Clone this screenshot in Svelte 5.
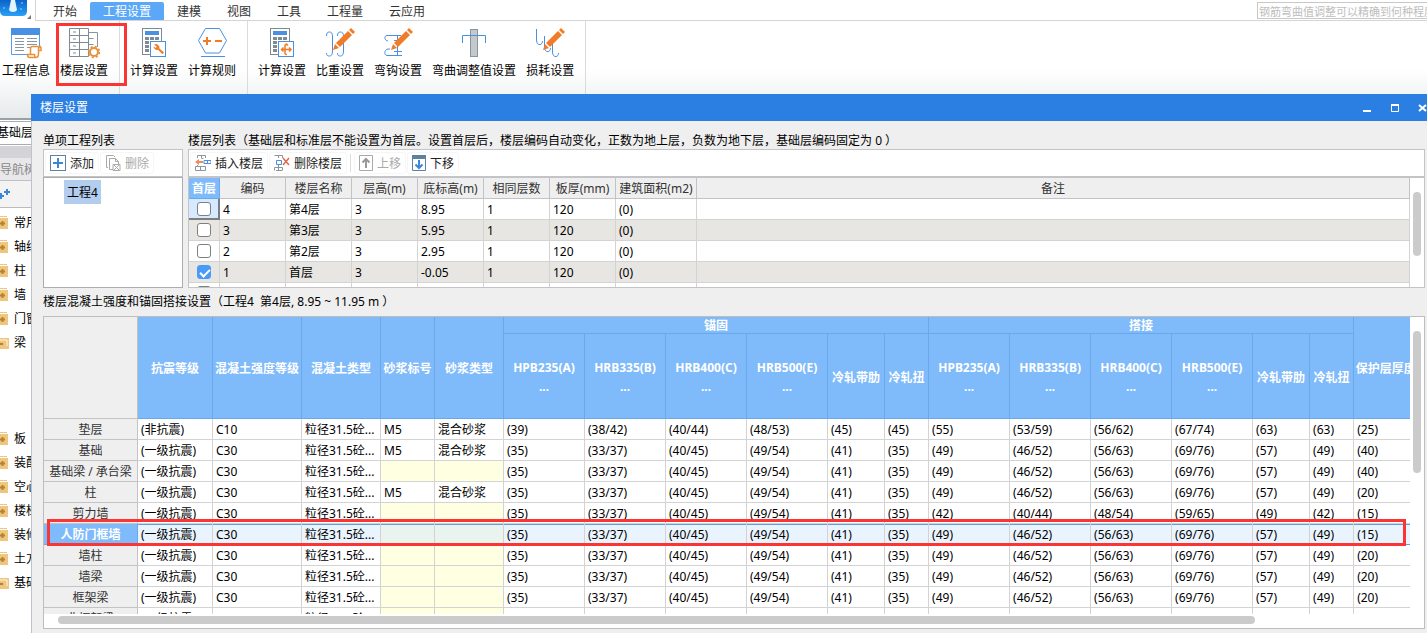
<script>
	const tabs = ['开始', '工程设置', '建模', '视图', '工具', '工程量', '云应用'];
	let activeTab = '工程设置';

	const ribbon = [
		[
			{ icon: 'info', text: '工程信息' },
			{ icon: 'floor', text: '楼层设置', marked: true }
		],
		[
			{ icon: 'calc', text: '计算设置' },
			{ icon: 'rule', text: '计算规则' }
		],
		[
			{ icon: 'calcMove', text: '计算设置' },
			{ icon: 'weight', text: '比重设置' },
			{ icon: 'hook', text: '弯钩设置' },
			{ icon: 'bend', text: '弯曲调整值设置' },
			{ icon: 'loss', text: '损耗设置' }
		]
	];

	const tree = [
		{ text: '常用构件类型' },
		{ text: '轴线' },
		{ text: '柱' },
		{ text: '墙' },
		{ text: '门窗洞' },
		{ text: '梁', open: true },
		{ text: '板' },
		{ text: '装配式' },
		{ text: '空心楼盖' },
		{ text: '楼梯' },
		{ text: '装修' },
		{ text: '土方' },
		{ text: '基础', open: true }
	];

	const floorHead = ['首层', '编码', '楼层名称', '层高(m)', '底标高(m)', '相同层数', '板厚(mm)', '建筑面积(m2)', '备注'];
	let floors = [
		{ first: false, cells: ['4', '第4层', '3', '8.95', '1', '120', '(0)', ''] },
		{ first: false, cells: ['3', '第3层', '3', '5.95', '1', '120', '(0)', ''] },
		{ first: false, cells: ['2', '第2层', '3', '2.95', '1', '120', '(0)', ''] },
		{ first: true, cells: ['1', '首层', '3', '-0.05', '1', '120', '(0)', ''] },
		{ first: false, cells: ['', '', '', '', '', '', '', ''] }
	];

	const grades = ['HPB235(A)', 'HRB335(B)', 'HRB400(C)', 'HRB500(E)', '冷轧带肋', '冷轧扭'];
	const anchor = ['(35)', '(33/37)', '(40/45)', '(49/54)', '(41)', '(35)'];
	const lap = ['(49)', '(46/52)', '(56/63)', '(69/76)', '(57)', '(49)'];
	const mix = '粒径31.5砼...';

	function part(name, cover, mortar = false, overlap = lap) {
		return {
			name,
			cells: ['(一级抗震)', 'C30', mix, mortar ? 'M5' : '', mortar ? '混合砂浆' : '', ...anchor, ...overlap, cover]
		};
	}

	const parts = [
		{
			name: '垫层',
			cells: [
				'(非抗震)', 'C10', mix, 'M5', '混合砂浆',
				'(39)', '(38/42)', '(40/44)', '(48/53)', '(45)', '(45)',
				'(55)', '(53/59)', '(56/62)', '(67/74)', '(63)', '(63)', '(25)'
			]
		},
		part('基础', '(40)', true),
		part('基础梁 / 承台梁', '(40)'),
		part('柱', '(20)', true),
		part('剪力墙', '(15)', false, ['(42)', '(40/44)', '(48/54)', '(59/65)', '(49)', '(42)']),
		part('人防门框墙', '(15)'),
		part('墙柱', '(20)'),
		part('墙梁', '(20)'),
		part('框架梁', '(20)'),
		part('非框架梁', '(20)')
	];
	let selected = '人防门框墙';
	const widths = [94, 75, 89, 79, 54, 69, 81, 81, 81, 81, 57, 44, 81, 81, 81, 81, 57, 44, 64];
</script>

{#snippet pencil()}
	<path d="M9 23l2-6 4 4z" fill="#f07c28" />
	<path d="M12 16L24 4l4 4-12 12z" fill="#f07c28" />
	<path d="M25 3l2-2 4 4-2 2z" fill="#f07c28" />
{/snippet}

{#snippet calculator()}
	<rect x="4.5" y="1.5" width="19" height="26" fill="#fff" stroke="#7f8b93" />
	<rect x="7" y="4" width="14" height="4" fill="#4a90e2" />
	<path d="M7 10h4v3H7zm5 0h4v3h-4zm5 0h4v3h-4zM7 14h4v3H7zm5 0h4v3h-4zM7 18h4v3H7zm0 4h4v3H7z" fill="#7f8b93" />
	<rect x="12.5" y="14.5" width="15" height="15" fill="#fff" stroke="#4a90e2" />
{/snippet}

{#snippet ribbonIcon(name)}
	<svg width="32" height="32" viewBox="0 0 32 32" fill="none" aria-hidden="true">
		{#if name === 'info'}
			<path d="M1.5 8v19.5h16M29.5 8v11" stroke="#5b9be5" />
			<path d="M1 1h29v7H1z" fill="#4a90e2" />
			<path d="M5 11.5h9m3 0h10M5 14.5h9m3 0h10M5 17.5h9m3 0h10M5 20.5h9m3 0h3M5 23.5h9" stroke="#8a959c" />
			<path d="M20.5 27V21.500c0-1.500.8-2 2-2H31c-1.500 0-2.500 1-2.500 2.500V27c0 2.500-1 3.500-3 3.500h-6c-1.500 0-2-1-2-3h7c0 2 .5 3 1.500 3M28.500 23.500h2.500V20" fill="#fff" stroke="#e8913a" stroke-width="1.500" />
		{:else if name === 'floor'}
			<path d="M20.5 5.5h9V20M20.5 11.5h5m-5 6h5m-5 6h1" stroke="#8a959c" />
			<path d="M1.5 1.5h19v28h-19zM11.5 1.5v28M1.5 8.500h19M1.5 15.5h19M1.5 22.5h19M5 5h3m-3 7h3m-3 7h3m-3 7h3" stroke="#7f8b93" />
			<circle cx="26" cy="25" r="4" fill="#fff" stroke="#e8913a" stroke-width="2" />
			<circle cx="26" cy="25" r="5.5" stroke="#e8913a" stroke-width="1.500" stroke-dasharray="2.200 2.120" />
		{:else if name === 'calc'}
			{@render calculator()}
			<path d="M16 17.5l3-.5 2.500 2.500-.3 1.800 4.800 4.200-1.500 1.800-4.500-4.600-2 .3-2.400-2.300.2-1.200 1.700 1.500 1.300-1.200z" fill="#f07c28" />
		{:else if name === 'calcMove'}
			{@render calculator()}
			<path d="M20.500 17.500c-2 0-1.500 2-1.500 4v5c0 1 1 1 2 1M18.500 18.500l2-1.500 1.500 1.500M16 22.500h8.500M17.500 20.500l-2 2 2 2M23 20.500l2 2-2 2" stroke="#f07c28" stroke-width="1.500" />
		{:else if name === 'rule'}
			<path d="M2.5 13.5l7-12h14l7 12-7 12.5h-14z" stroke="#4a90e2" />
			<path d="M5 29.5h24" stroke="#4a90e2" />
			<path d="M7 14h8m-4-4v8M19 14h7" stroke="#f07c28" stroke-width="2" />
		{:else if name === 'weight'}
			<path d="M2.5 9c0-3 1-4 3-4s3 1.500 3 4v15c0 3.500-1 5-3 5s-3-.5-3-3M13.500 9c0-3 1-4 3-4s3 1.500 3 4v15c0 3.500-1 5-3 5s-3-.5-3-3" stroke="#4a90e2" />
			{@render pencil()}
		{:else if name === 'hook'}
			<path d="M19 8.500H5c-3 0-3 5 1 5.500M20 28.500H5c-3 0-3-6 1-6.500h2M15.500 9v19M12 13.500h10M12 24.500h8" stroke="#4a90e2" />
			{@render pencil()}
		{:else if name === 'bend'}
			<rect x="12.5" y="2.5" width="7" height="27" fill="#c3c8cc" stroke="#8a959c" />
			<path d="M4.5 16V8.500h23V16" stroke="#4a90e2" />
		{:else}
			<path d="M2.5 2v11c0 6 6 6 6 1M10.500 9v11c0 6 6 6 6 1M18.500 16v9c0 6 6 6 6 1" stroke="#4a90e2" />
			{@render pencil()}
		{/if}
	</svg>
{/snippet}

<div class="app">
	<header>
		<div class="logo">
			<svg width="35" height="20" viewBox="0 0 35 20" aria-hidden="true">
				<defs>
					<linearGradient id="logoFill" x1="0" y1="0" x2="0" y2="1">
						<stop offset="0" stop-color="#0b63c8" />
						<stop offset="1" stop-color="#2aa0f6" />
					</linearGradient>
				</defs>
				<path d="M0 0h27v11q0 5-5 5H5q-5 0-5-5z" fill="url(#logoFill)" />
				<path d="M11 0h4l2 10q-1 2-4 2t-4-2z" fill="#e4f4ff" />
				<path d="M3 8h2M21 3h2M20 9h2" stroke="#8fd0ff" />
				<path d="M31 15v4h-4z" fill="#777" />
			</svg>
		</div>
		<nav>
			{#each tabs as tab}
				<button class="tab" class:active={tab === activeTab} on:click={() => (activeTab = tab)}>{tab}</button>
			{/each}
		</nav>
		<input class="search" type="text" aria-label="搜索" placeholder="钢筋弯曲值调整可以精确到何种程度" />
	</header>

	<div class="ribbon">
		{#each ribbon as group}
			<div class="group">
				{#each group as item}
					<button class="tool" class:marked={item.marked}>
						{@render ribbonIcon(item.icon)}
						<span>{item.text}</span>
					</button>
				{/each}
			</div>
		{/each}
	</div>

	<aside>
		<select class="floorSelect" aria-label="楼层"><option>基础层</option></select>
		<h2>导航树</h2>
		<div class="treeTools">
			<svg width="20" height="16" viewBox="0 0 20 16" aria-hidden="true">
				<path d="M15 2v6M12 5h6M9 6v6M6 9h6" stroke="#3b86d8" stroke-width="2" />
			</svg>
		</div>
		<ul class="tree">
			{#each tree as node}
				<li class:open={node.open}>
					<svg width="14" height="14" viewBox="0 0 14 14" aria-hidden="true">
						{#if node.open}
							<path d="M1 2h13v11H1z" fill="#efc680" />
							<path d="M2 4h10v6" fill="none" stroke="#fff5dd" />
							<path d="M3 8h5" stroke="#b5832f" stroke-width="2" />
						{:else}
							<path d="M3 0h9v1H3zM1 2h12v11H1z" fill="#efc680" />
							<path d="M5 7.500h5M7.500 5v5" stroke="#b5832f" stroke-width="2" />
						{/if}
					</svg>
					{node.text}
				</li>
			{/each}
		</ul>
	</aside>

	<section class="dialog">
		<div class="titleBar">
			<h1>楼层设置</h1>
			<button aria-label="最小化"><svg width="10" height="10"><path d="M1 8h8" stroke="#fff" stroke-width="2" /></svg></button>
			<button aria-label="最大化"
				><svg width="10" height="10"><path d="M1 2h8M1.500 2v6.500h7V2" fill="none" stroke="#fff" /><path d="M1 2h8" stroke="#fff" stroke-width="2" /></svg></button
			>
			<button aria-label="关闭"><svg width="10" height="10"><path d="M1 2l7 6M8 2L1 8" stroke="#fff" stroke-width="2" /></svg></button>
		</div>

		<div class="body">
			<div class="top">
				<div class="projects">
					<h3>单项工程列表</h3>
					<div class="toolbar">
						<button>
							<svg width="16" height="16" fill="none"><rect x="0.5" y="0.5" width="15" height="15" stroke="#60809c" /><path d="M3 8h10M8 3v10" stroke="#3b86d8" stroke-width="2" /></svg>
							<span>添加</span>
						</button>
						<button disabled>
							<svg width="16" height="16" fill="none" stroke="#aaa"><path d="M3 12.5H1.500v-12h7L10 2M4.500 3.500h6l3 3V9M4.500 3.500v11H8M10.500 3.500v3h3" /><path d="M8 9.500h7v6H8zM9 10l5 5M14 10l-5 5" /></svg>
							<span>删除</span>
						</button>
					</div>
					<div class="projectList"><span>工程4</span></div>
				</div>

				<div class="floors">
					<h3>楼层列表（基础层和标准层不能设置为首层。设置首层后，楼层编码自动变化，正数为地上层，负数为地下层，基础层编码固定为 0 ）</h3>
					<div class="toolbar">
						<button>
							<svg width="16" height="16" fill="none"><path d="M2.5 3V.5h8V3M6.500.5V3M.5 11.500h10v4H.5zM5.500 11.500v4M2.500 10V11M6.500 3.500h2" stroke="#8a959c" /><path d="M9 5.500h7v3H9zM12.500 5.500v3" stroke="#4a90e2" /><path d="M0 7l4-3v2h4v2H4v2z" fill="#f5895c" /></svg>
							<span>插入楼层</span>
						</button>
						<button>
							<svg width="16" height="16" fill="none"><path d="M.5.5h8V3M4.500.5V3M.5 15.500V12.500h8v3M4.500 10v6M2 15.500h6" stroke="#8a959c" /><path d="M2.500 5.500h5v4h-5z" stroke="#4a90e2" /><path d="M9 3l6 7M15 3l-6 7" stroke="#e2674a" stroke-width="1.500" /></svg>
							<span>删除楼层</span>
						</button>
						<i></i>
						<button disabled>
							<svg width="14" height="16" fill="none"><path d="M.5.5h13v15H.5z" stroke="#aaa" /><path d="M7 13V4M3.500 7.500L7 4l3.500 3.500" stroke="#999" stroke-width="2" /></svg>
							<span>上移</span>
						</button>
						<button>
							<svg width="14" height="16" fill="none"><path d="M.5.5h13v15H.5z" stroke="#60809c" /><path d="M0 0h14v4H0z" fill="#60809c" /><path d="M7 5v8M3.500 9.500L7 13l3.500-3.500" stroke="#3b86d8" stroke-width="2" /></svg>
							<span>下移</span>
						</button>
					</div>
					<div class="floorGrid">
						<table>
							<thead>
								<tr>
									{#each floorHead as title}
										<th>{title}</th>
									{/each}
								</tr>
							</thead>
							<tbody>
								{#each floors as floor, i}
									<tr>
										<td class:current={i === 0}>
											<input type="checkbox" aria-label="首层" bind:checked={floor.first} />
										</td>
										{#each floor.cells as cell}
											<td>{cell}</td>
										{/each}
									</tr>
								{/each}
							</tbody>
						</table>
						<div class="vScroll"><div></div></div>
					</div>
				</div>
			</div>

			<h3 class="gridTitle">楼层混凝土强度和锚固搭接设置（工程4&nbsp; 第4层, 8.95 ~ 11.95 m ）</h3>
			<div class="strength">
				<div class="gridView">
					<table>
						<colgroup>
							{#each widths as w}
								<col style="width: {w}px" />
							{/each}
						</colgroup>
						<thead>
							<tr class="groupRow">
								<th rowspan="2" class="corner" aria-label="构件"></th>
								<th rowspan="2">抗震等级</th>
								<th rowspan="2">混凝土强度等级</th>
								<th rowspan="2">混凝土类型</th>
								<th rowspan="2">砂浆标号</th>
								<th rowspan="2">砂浆类型</th>
								<th colspan="6">锚固</th>
								<th colspan="6">搭接</th>
								<th rowspan="2">保护层厚度</th>
							</tr>
							<tr class="gradeRow">
								{#each [...grades, ...grades] as grade}
									<th>{grade}{#if grade.startsWith('H')}<br />...{/if}</th>
								{/each}
							</tr>
						</thead>
						<tbody>
							{#each parts as row}
								<tr class:selected={row.name === selected} on:click={() => (selected = row.name)}>
									<th>{row.name}</th>
									{#each row.cells as cell}
										<td class:locked={cell === ''}>{cell}</td>
									{/each}
								</tr>
							{/each}
						</tbody>
					</table>
				</div>
				<div class="vScroll"><div></div></div>
				<div class="hScroll"><div></div></div>
				<div class="rowMark"></div>
			</div>
		</div>
	</section>
</div>

<style>
	:global(body) {
		margin: 0;
	}
	.app,
	.app :global(*) {
		box-sizing: border-box;
	}
	.app {
		position: relative;
		height: 100vh;
		overflow: hidden;
		background: #fff;
		color: #000;
		font: 12px/20px 'Noto Sans', 'Noto Sans CJK SC', sans-serif;
	}
	button {
		border: none;
		background: none;
		padding: 0;
		font: inherit;
		color: inherit;
		white-space: nowrap;
	}
	h1,
	h2,
	h3 {
		margin: 0;
		font-size: 12px;
		font-weight: 400;
		white-space: nowrap;
	}
	svg {
		flex: none;
		display: block;
	}

	header {
		display: flex;
		height: 21px;
		border-bottom: 1px solid #d5d5d5;
	}
	.logo {
		width: 36px;
		height: 21px;
		border-right: 1px solid #d5d5d5;
		background: #fff;
	}
	nav {
		display: flex;
		align-items: flex-end;
		padding-left: 4px;
	}
	.tab {
		height: 18px;
		padding: 2px 13px 0;
		line-height: 16px;
		color: #333;
	}
	.tab.active {
		background: #5ca8f8;
		color: #fff;
		border-radius: 2px 2px 0 0;
	}
	.search {
		flex: none;
		width: 190px;
		height: 17px;
		margin: 2px -20px 0 auto;
		padding: 1px 1px 0;
		border: 1px solid #c8c8c8;
		font: 11px/14px 'Noto Sans', 'Noto Sans CJK SC', sans-serif;
	}
	.search::placeholder {
		color: #bdbdbd;
		opacity: 1;
	}

	.ribbon {
		display: flex;
		height: 99px;
		border-bottom: 2px solid #9aa0a4;
		background: linear-gradient(#fff 50%, #e6eaeb);
	}
	.group {
		display: flex;
		align-items: flex-start;
		gap: 10px;
		padding: 6px 11px 0 10px;
		border-right: 1px solid #d9dcdd;
	}
	.group:first-child {
		padding-left: 2px;
	}
	.tool {
		position: relative;
		display: flex;
		flex-direction: column;
		align-items: center;
		gap: 2px;
	}
	.marked::after {
		content: '';
		position: absolute;
		inset: -4px -19px -5px -4px;
		border: 3px solid #fb3434;
		z-index: 1;
	}

	aside {
		width: 160px;
		margin-left: -8px;
	}
	.floorSelect {
		display: block;
		width: 100%;
		height: 24px;
		margin-top: 1px;
		padding: 0 4px;
		border: 1px solid #a9adb3;
		border-radius: 0;
		appearance: none;
		background: #fff;
		font: inherit;
		color: #000;
	}
	h2 {
		height: 35px;
		margin-top: 1px;
		padding-left: 8px;
		border-top: 12px solid #d3d3d8;
		border-bottom: 1px solid #c0c0c4;
		background: #e8e8ea;
		line-height: 24px;
		color: #888;
	}
	.treeTools {
		height: 27px;
		padding-top: 6px;
		border-bottom: 1px solid #bbb;
		background: #f3f3f3;
	}
	.tree {
		margin: 0;
		padding: 3px 0 0 3px;
		list-style: none;
	}
	.tree li {
		display: flex;
		align-items: center;
		gap: 5px;
		height: 24px;
		white-space: nowrap;
	}
	.tree li.open {
		margin-bottom: 72px;
	}

	.dialog {
		position: absolute;
		inset: 94px 0 0 31px;
		display: flex;
		flex-direction: column;
		border-left: 1px solid #bcc3cd;
		background: #efefef;
	}
	.titleBar {
		display: flex;
		flex: none;
		align-items: center;
		gap: 18px;
		height: 27px;
		margin: 0 -1px;
		padding-left: 9px;
		background: #2b7fe2;
		color: #fff;
	}
	.titleBar h1 {
		flex: 1;
		padding-top: 1px;
	}
	.body {
		display: flex;
		flex: 1;
		flex-direction: column;
		min-height: 0;
		padding: 10px 2px 4px 11px;
	}
	.top {
		display: flex;
		gap: 5px;
	}
	.projects {
		display: flex;
		flex: none;
		flex-direction: column;
		width: 140px;
	}
	.floors {
		flex: 1;
		min-width: 0;
	}
	h3 {
		height: 18px;
	}
	.toolbar {
		display: flex;
		align-items: center;
		gap: 1px;
		height: 28px;
		padding: 0 1px;
		border: 1px solid #c3c3c8;
		background: #fff;
	}
	.toolbar button {
		display: flex;
		align-items: center;
		gap: 4px;
		height: 22px;
		padding: 0 4px;
		border: 1px solid #f6f6f6;
		border-radius: 3px;
		color: #222;
	}
	.toolbar span {
		padding-top: 2px;
	}
	.toolbar button:disabled {
		color: #aaa;
	}
	.toolbar i {
		width: 1px;
		height: 18px;
		margin: 0 2px;
		background: #ddd;
	}
	.projectList {
		flex: 1;
		padding: 2px 20px;
		border: 1px solid #adadad;
		background: #fff;
	}
	.projectList span {
		display: inline-block;
		padding: 3px 3px 1px;
		background: #b3cdee;
	}

	table {
		border-collapse: separate;
		border-spacing: 0;
		table-layout: fixed;
	}
	th,
	td {
		height: 21px;
		padding: 2px 3px 0;
		border: solid #d3d3d3;
		border-width: 0 1px 1px 0;
		overflow: hidden;
		white-space: nowrap;
		text-align: left;
		font-weight: 400;
		line-height: 18px;
	}
	th {
		padding: 2px 0 0;
		border-color: #c3c3c3;
		background: #efefef;
		text-align: center;
		color: #333;
	}
	.floorGrid {
		display: flex;
		height: 111px;
		border: 1px solid #c3c3c8;
		background: #fff;
		overflow: hidden;
	}
	.floorGrid table {
		flex: 1;
		width: 100%;
		height: 126px;
	}
	.floorGrid th {
		width: 66px;
	}
	.floorGrid th:first-child {
		width: 31px;
		border-color: #69aaee;
		background: #7fbafa;
		color: #fff;
		font-weight: 700;
	}
	.floorGrid th:nth-child(8) {
		width: 81px;
	}
	.floorGrid th:last-child {
		width: auto;
	}
	.floorGrid tr:nth-child(even) td {
		background: #e8e6e2;
	}
	.floorGrid td:first-child {
		padding: 0;
		text-align: center;
	}
	.floorGrid tr td.current {
		border: solid #7d7d7d;
		border-width: 0 2px 2px 0;
		background: #d5e9ff;
	}
	input[type='checkbox'] {
		display: block;
		appearance: none;
		width: 14px;
		height: 14px;
		margin: 0 auto;
		border: 1px solid #808080;
		border-radius: 3px;
		background: #fff;
	}
	input[type='checkbox']:checked {
		border-color: #4a9bf8;
		background: #4a9bf8;
	}
	input[type='checkbox']:checked::after {
		content: '';
		display: block;
		width: 8px;
		height: 4px;
		margin: 3px 2px;
		border: solid #fff;
		border-width: 0 0 2px 2px;
		transform: rotate(-45deg);
	}
	.vScroll {
		flex: none;
		width: 14px;
		padding: 14px 2px 0 3px;
	}
	.vScroll div {
		width: 8px;
		height: 64px;
		border-radius: 4px;
		background: #cbcbcb;
	}

	.gridTitle {
		height: 28px;
		padding-top: 4px;
	}
	.strength {
		position: relative;
		display: grid;
		grid-template: minmax(0, 1fr) 14px / minmax(0, 1fr) 14px;
		flex: 1;
		min-height: 0;
		border: 1px solid #bdbdbd;
		background: #fff;
	}
	.gridView {
		overflow: hidden;
	}
	.gridView table {
		width: 1374px;
	}
	.strength .vScroll div {
		height: 142px;
	}
	thead tr[class] th {
		border-color: #69a8ea;
		background: #7fbafa;
		color: #fff;
		font-weight: 700;
		line-height: 19px;
	}
	thead tr[class] .corner {
		border-color: #c3c3c3;
		background: #efefef;
	}
	.groupRow th {
		height: 17px;
	}
	thead .groupRow th[colspan] {
		line-height: 14px;
	}
	.gradeRow th {
		height: 85px;
	}
	.locked {
		background: #ffffe1;
	}
	.selected td {
		border-bottom-color: #5f9fe0;
		background: #e9f4ff;
		box-shadow: inset 0 1px #5f9fe0;
	}
	.selected .locked {
		background: #eaf4ee;
	}
	.selected th {
		border-color: #69a8ea;
		background: #7fbafa;
		color: #fff;
		font-weight: 700;
	}
	.hScroll {
		padding: 2px 155px 0 14px;
	}
	.hScroll div {
		height: 8px;
		border-radius: 4px;
		background: #cbcbcb;
	}
	.rowMark {
		position: absolute;
		top: 202px;
		left: 3px;
		right: 18px;
		height: 27px;
		border: 3px solid #fb3434;
		pointer-events: none;
	}
</style>
